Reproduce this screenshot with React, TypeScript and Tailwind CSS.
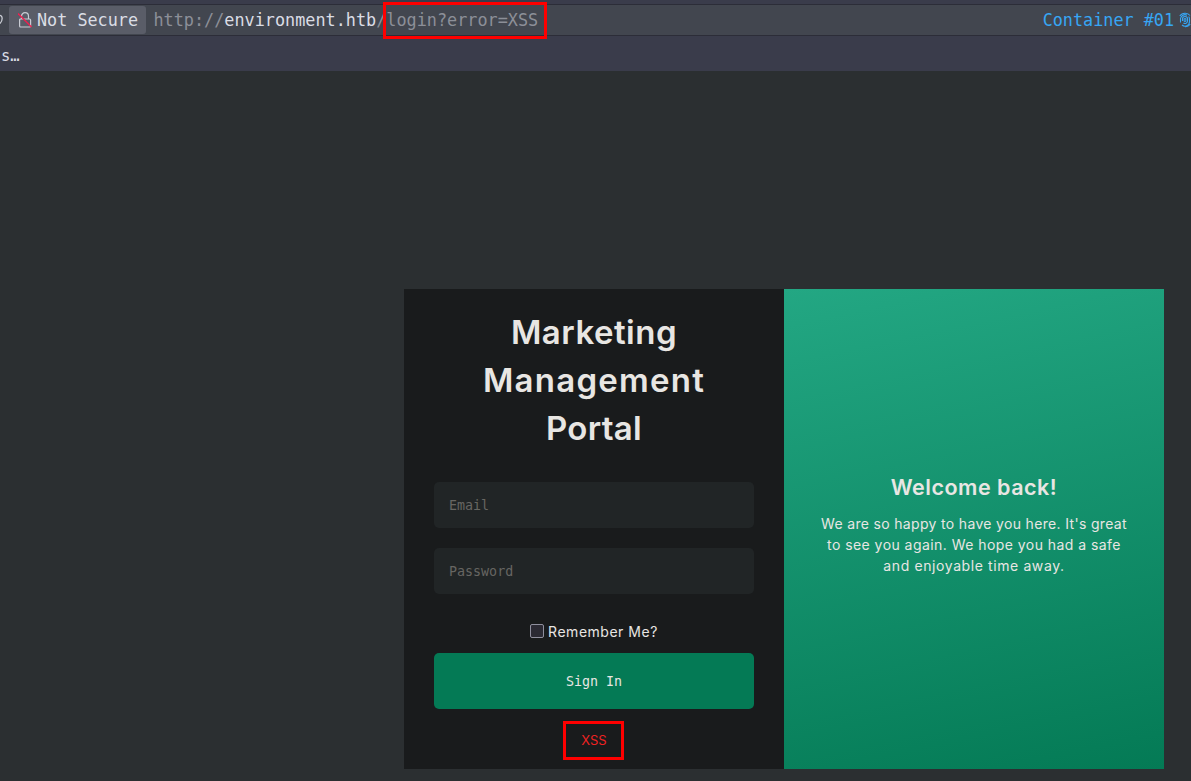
function LockIcon() {
  return (
    <svg width="16" height="18" viewBox="0 0 16 18" fill="none" className="-mt-px shrink-0">
      <path d="M3.5 8V5.200a3.500 3.500 0 0 1 7 0V8" stroke="#c9ccd4" strokeWidth="1.2" />
      <path d="M1.600 9a1 1 0 0 1 1-1h9a1 1 0 0 1 1 1v6a1 1 0 0 1-1 1h-9a1 1 0 0 1-1-1z" stroke="#c9ccd4" strokeWidth="1.2" />
      <path d="M0 2.500L13.500 16" stroke="#f01f4f" strokeWidth="1.500" />
    </svg>
  );
}

function FingerprintIcon() {
  return (
    <svg width="12" height="16" viewBox="0 0 12 16" fill="none" stroke="#37a6f5" strokeWidth="1.1" className="ml-[5px] shrink-0">
      <ellipse cx="6" cy="8" rx="1" ry="1.500" />
      <path d="M3.500 9V7a2.500 2.500 0 0 1 5 0v2a2.500 2.500 0 0 1-4 2" />
      <path d="M1.500 10.500v-4A4.500 4.500 0 0 1 8 3.200M9.700 4.500a5 5 0 0 1 .8 3v2A4.500 4.500 0 0 1 3 13" />
      <path d="M.8 4A6 6 0 0 1 6 1.200a6 6 0 0 1 5 2.300M11.200 12A6 6 0 0 1 6 14.800" />
    </svg>
  );
}

function AddressBar() {
  return (
    <header className="relative h-[71px] bg-[#3a3c4b] font-['DejaVu_Sans_Mono',monospace] text-[16.8px] text-[#dbdde5]">
      <div className="h-1" />
      <div className="flex h-8 items-center border-y border-[#2c2d38] bg-[#42464f]">
        <div className="flex w-[9px] shrink-0 justify-end overflow-hidden pr-[6px]">
          <svg width="6" height="14" viewBox="0 0 6 14" fill="none" className="shrink-0">
            <path d="M2 2.500c4-1 4 5 1 8" stroke="#c9ccd4" strokeWidth="1.3" />
          </svg>
        </div>
        <div className="flex h-7 w-[137px] items-center rounded-[3px] bg-[#5a5d68] pl-[9px]">
          <LockIcon />
          <span className="ml-[3px] whitespace-nowrap pt-px">Not Secure</span>
        </div>
        <p className="ml-[7.5px] whitespace-pre pt-0.5 text-[16.82px] text-[#8c8f98]">
          http://<span className="text-[#dbdde5]">environment.htb</span>/login?error=XSS
        </p>
        <div className="ml-auto flex items-center whitespace-nowrap text-[#37a6f5]">
          <span className="pt-0.5">Container #01</span>
          <FingerprintIcon />
        </div>
      </div>
      <div className="pl-px pt-2.5 text-[15.500px] leading-5">s…</div>
      <div className="absolute left-[383px] top-[2px] h-[37px] w-[164px] border-[3px] border-[#fe0000]" />
    </header>
  );
}

function Field({ label, type }: { label: string; type: string }) {
  return (
    <input
      type={type}
      placeholder={label}
      className="mb-5 block h-[46px] w-full rounded-[5px] bg-[#212526] px-[15px] font-['DejaVu_Sans_Mono',monospace] text-[13.333px] placeholder:text-[#676662]"
    />
  );
}

export default function App() {
  return (
    <div className="h-[781px] w-[1191px] overflow-hidden bg-[#2b2f31] font-[Inter,sans-serif] text-[#e8e6e3]">
      <AddressBar />
      <main className="ml-[404px] mt-[218px] flex h-[480px] w-[760px]">
        <section className="w-[380px] bg-[#191b1c] px-[30px] pt-[19px] text-center">
          <h1 className="flex flex-col items-center text-[33px] font-semibold leading-[48px]">
            <span className="tracking-[0.5px]">Marketing</span>
            <span className="tracking-[1.25px]">Management</span>
            <span className="tracking-[0.3px]">Portal</span>
          </h1>
          <form className="pt-[30px]">
            <Field label="Email" type="text" />
            <Field label="Password" type="password" />
            <label className="flex h-[39px] items-center justify-center gap-1 pb-1 text-[14px]">
              <input type="checkbox" className="-mt-0.5 size-3.5 appearance-none rounded-[2px] border border-[#8f8f9d] bg-[#2b2a33]" />
              <span className="tracking-[0.52px]">Remember Me?</span>
            </label>
            <button type="button" className="block h-14 w-full rounded-[5px] bg-[#047a55] pt-0.5 font-['DejaVu_Sans_Mono',monospace] text-[13.333px]">
              Sign In
            </button>
          </form>
          <div className="ml-[129px] mt-3 flex h-[39px] w-[61px] items-center justify-center border-[3px] border-[#fe0000] pl-px text-[13px] text-[#ee2222]">
            XSS
          </div>
        </section>
        <section className="flex w-[380px] flex-col items-center bg-[linear-gradient(168deg,#23a783_0%,#047a55_100%)] pt-[182px] text-center">
          <h2 className="text-[21.500px] font-semibold leading-8 tracking-[0.5px]">Welcome back!</h2>
          <p className="mt-2.5 flex flex-col text-[14px] leading-[21px]">
            <span className="tracking-[0.33px]">We are so happy to have you here. It's great</span>
            <span className="tracking-[0.45px]">to see you again. We hope you had a safe</span>
            <span className="tracking-[0.6px]">and enjoyable time away.</span>
          </p>
        </section>
      </main>
    </div>
  );
}
